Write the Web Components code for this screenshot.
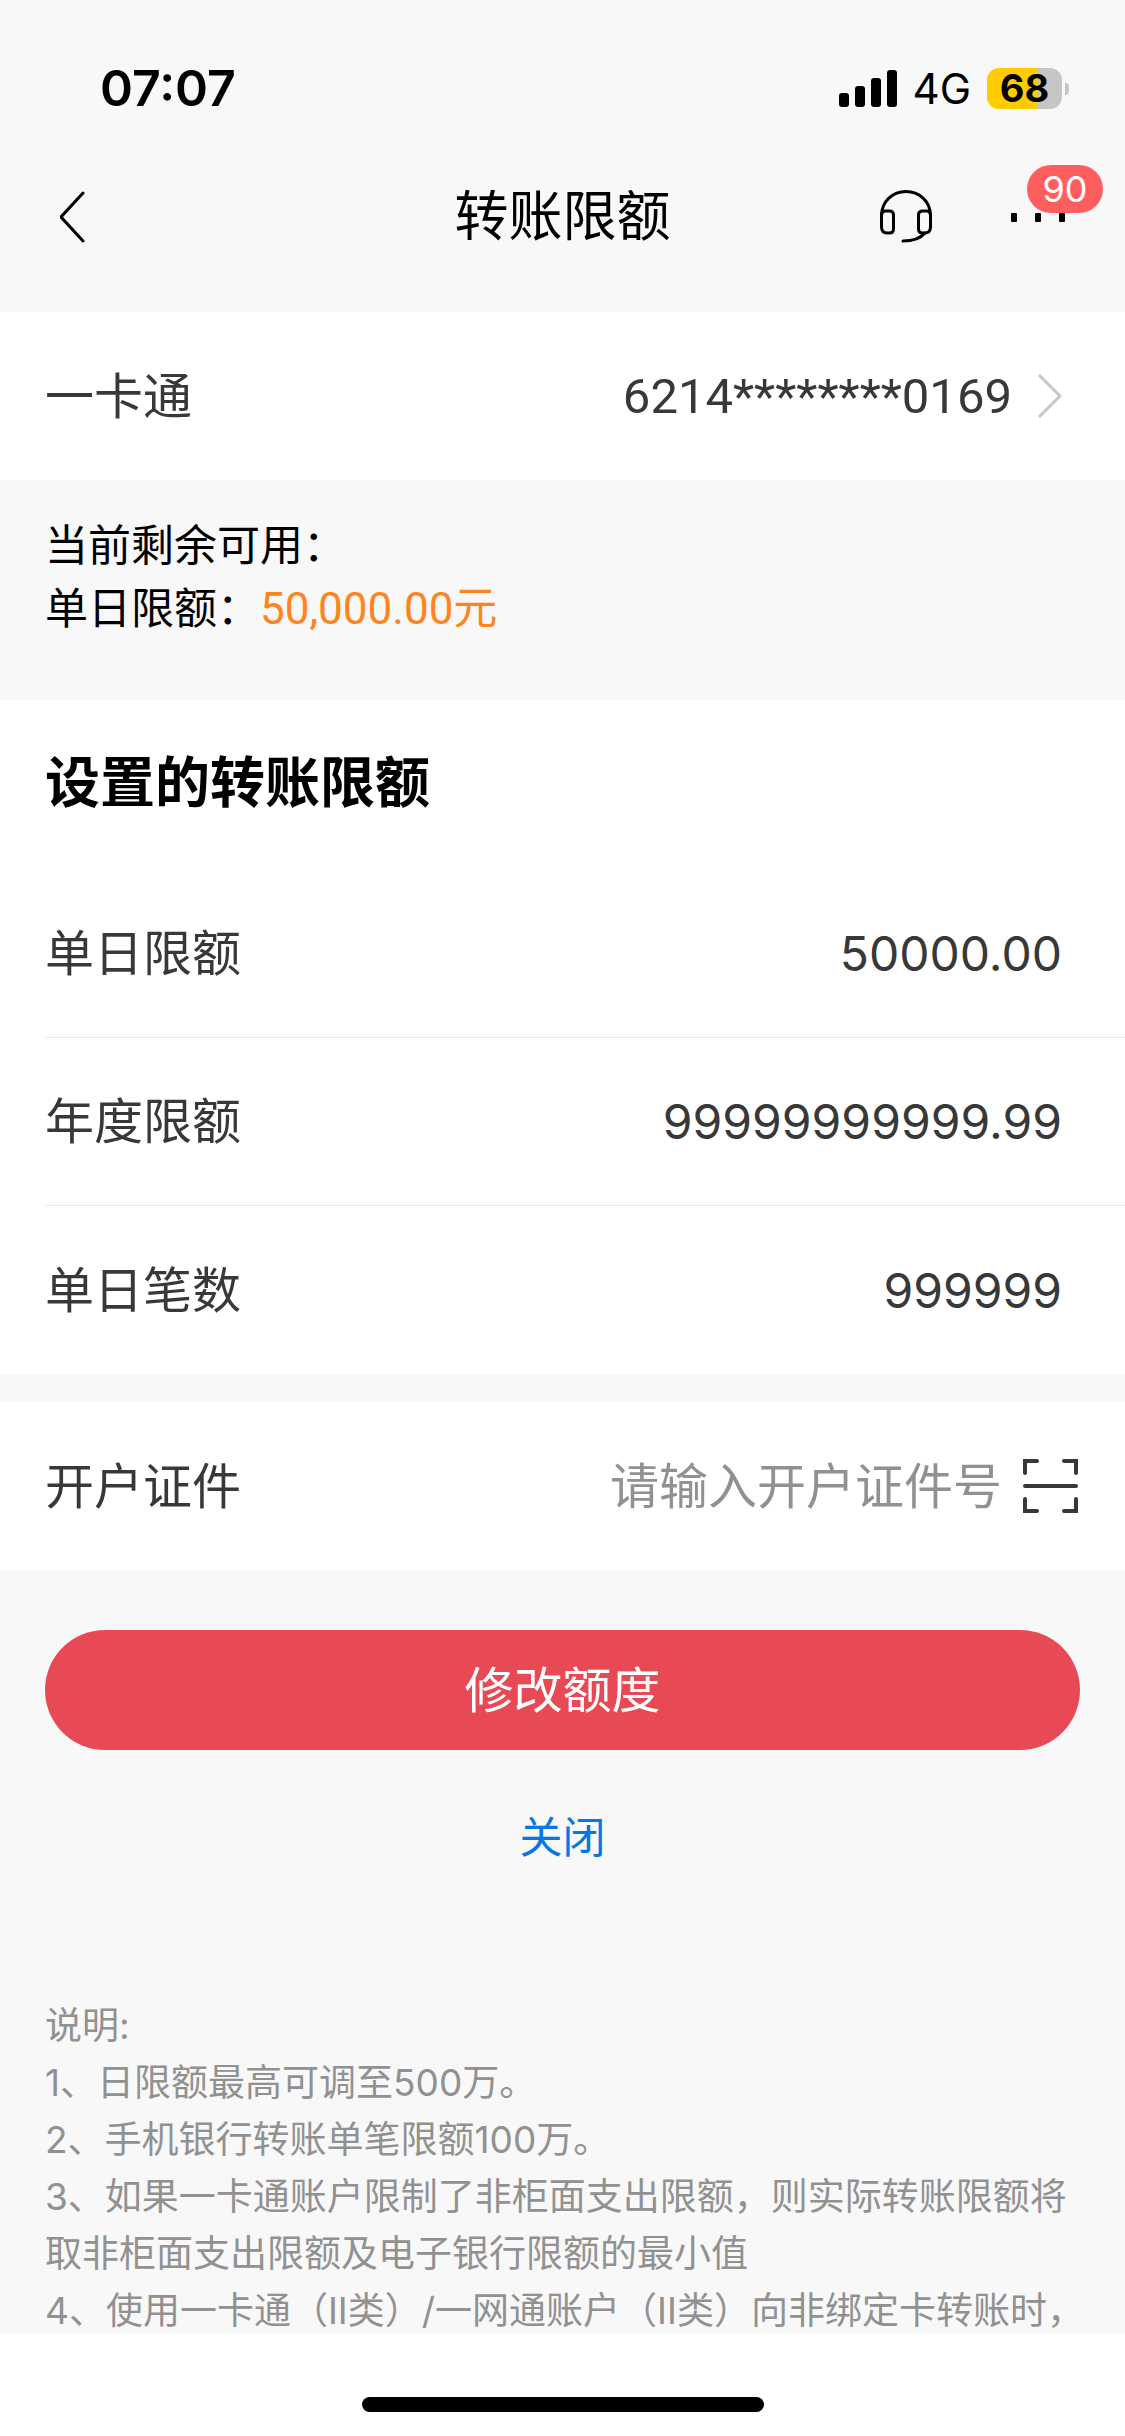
<!DOCTYPE html>
<html lang="zh-CN">
<head>
  <meta charset="UTF-8">
  <meta name="viewport" content="width=device-width, initial-scale=1">
  <title>转账限额</title>
  <style>
    :root {
      --bg: #f8f8f8;
      --surface: #ffffff;
      --text: #383838;
      --muted: #919191;
      --line: #e8e8e8;
      --accent: #e84a55;
      --orange: #ff8420;
      --link: #0577e6;
      --gutter: 45px;
      --narrow: Roboto, "Noto Sans CJK SC", sans-serif;
    }

    body {
      margin: 0;
      background: var(--bg);
      color: #000;
      font-family: Inter, "Noto Sans CJK SC", sans-serif;
      font-size: 49px;
      line-height: 63px;
    }
  </style>
</head>
<body>
  <limit-screen>
    <status-bar slot="header" time="07:07" network="4G" battery="68"></status-bar>
    <nav-bar slot="header" badge="90">转账限额</nav-bar>

    <setting-row href="#card"><span slot="label">一卡通</span>6214********0169</setting-row>

    <quota-summary><span slot="title">当前剩余可用：</span><span slot="label">单日限额：</span>50,000.00元</quota-summary>

    <setting-group heading="设置的转账限额">
      <setting-row divider><span slot="label">单日限额</span>50000.00</setting-row>
      <setting-row divider><span slot="label">年度限额</span>99999999999.99</setting-row>
      <setting-row><span slot="label">单日笔数</span>999999</setting-row>
    </setting-group>

    <id-field label="开户证件" placeholder="请输入开户证件号"></id-field>

    <form-actions>
      <span slot="submit">修改额度</span>
      <span slot="close">关闭</span>
    </form-actions>

    <notes-list>
      <p>说明:</p>
      <p>1、日限额最高可调至500万。</p>
      <p>2、手机银行转账单笔限额100万。</p>
      <p>3、如果一卡通账户限制了非柜面支出限额，则实际转账限额将取非柜面支出限额及电子银行限额的最小值</p>
      <p>4、使用一卡通（II类）/一网通账户（II类）向非绑定卡转账时，</p>
    </notes-list>
  </limit-screen>

  <script>
    class LimitScreen extends HTMLElement {
      constructor() {
        super();
        this.attachShadow({ mode: 'open' });
        this.shadowRoot.innerHTML = `
        <style>
          :host {
            display: flex;
            flex-direction: column;
            height: 100vh;
          }

          main {
            flex: 1;
            min-height: 0;
            overflow: hidden;
          }

          footer {
            display: flex;
            justify-content: center;
            align-items: flex-end;
            box-sizing: border-box;
            height: 103px;
            padding-bottom: 24px;
            background: var(--surface);
          }

          .home {
            width: 402px;
            height: 15px;
            border-radius: 8px;
            background: #000;
          }
        </style>
        <header><slot name="header"></slot></header>
        <main><slot></slot></main>
        <footer><div class="home"></div></footer>
        `;
      }
    }

    class StatusBar extends HTMLElement {
      constructor() {
        super();
        this.attachShadow({ mode: 'open' });
      }

      connectedCallback() {
        const level = parseInt(this.getAttribute('battery')) || 0;

        this.shadowRoot.innerHTML = `
        <style>
          :host {
            display: flex;
            justify-content: space-between;
            align-items: center;
            box-sizing: border-box;
            height: 144px;
            padding: 33px 56px 0 100px;
          }

          .time {
            font-size: 50px;
            font-weight: 600;
          }

          .status {
            display: flex;
            align-items: center;
          }

          .network {
            margin: 0 16px;
            font-size: 42px;
          }

          .battery {
            display: flex;
            justify-content: center;
            align-items: center;
            width: 75px;
            height: 41px;
            border-radius: 12px;
            background: linear-gradient(to right, #ffcc00 ${level}%, #c6c6c6 ${level}%);
            font-size: 38px;
            font-weight: 700;
          }

          .cap {
            width: 4px;
            height: 12px;
            margin-left: 3px;
            border-radius: 0 6px 6px 0;
            background: #c6c6c6;
          }
        </style>
        <span class="time">${this.getAttribute('time')}</span>
        <div class="status">
          <svg width="58" height="38" viewBox="0 0 58 38" aria-hidden="true">
            <rect x="0" y="23" width="10" height="14" rx="3"/>
            <rect x="16" y="16" width="10" height="21" rx="3"/>
            <rect x="32" y="8" width="10" height="29" rx="3"/>
            <rect x="48" y="0" width="10" height="37" rx="3"/>
          </svg>
          <span class="network">${this.getAttribute('network')}</span>
          <span class="battery">${level}</span>
          <span class="cap"></span>
        </div>
        `;
      }
    }

    class NavBar extends HTMLElement {
      constructor() {
        super();
        this.attachShadow({ mode: 'open' });
      }

      connectedCallback() {
        this.shadowRoot.innerHTML = `
        <style>
          :host {
            display: grid;
            grid-template-columns: 1fr auto 1fr;
            align-items: center;
            box-sizing: border-box;
            height: 168px;
            padding: 0 60px 24px;
          }

          h1 {
            margin: 0;
            font-size: 54px;
            font-weight: 400;
          }

          button {
            display: flex;
            justify-content: center;
            align-items: center;
            width: 54px;
            height: 54px;
            padding: 0;
            border: 0;
            background: none;
            cursor: pointer;
          }

          .tools {
            display: flex;
            justify-content: flex-end;
            gap: 78px;
          }

          .more {
            position: relative;
          }

          /* sits over the last of the three dots */
          .badge {
            position: absolute;
            top: -24px;
            left: 16px;
            width: 76px;
            height: 48px;
            border-radius: 24px;
            background: #ff5e5e;
            color: #fff;
            font: 36px/48px Inter, sans-serif;
            text-align: center;
          }
        </style>
        <button aria-label="返回">
          <svg width="54" height="54" viewBox="0 0 54 54" fill="none" stroke="#000" stroke-width="3" stroke-linecap="round" stroke-linejoin="round">
            <path d="M23 4 1 28l22 24"/>
          </svg>
        </button>
        <h1><slot></slot></h1>
        <div class="tools">
          <button aria-label="客服">
            <svg width="54" height="54" viewBox="0 0 54 54" fill="none" stroke="#000" stroke-width="3" stroke-linecap="round">
              <path d="M2.500 30V27C2.500 12 14 2.500 27 2.500S51.500 12 51.500 27v3"/>
              <path d="M2.500 26q0-4 4-4h4q4 0 4 4v14q0 4-4 4h-2q-6 0-6-6z"/>
              <path d="M51.500 26q0-4-4-4h-4q-4 0-4 4v14q0 4 4 4h2q6 0 6-6z"/>
              <path d="M46 44C41 50 34 52 24 52"/>
            </svg>
          </button>
          <button class="more" aria-label="更多">
            <svg width="54" height="54" viewBox="0 0 54 54">
              <rect x="0" y="24" width="6" height="9" rx="1"/>
              <rect x="24" y="24" width="6" height="9" rx="1"/>
              <rect x="48" y="24" width="6" height="9" rx="1"/>
            </svg>
            <span class="badge">${this.getAttribute('badge')}</span>
          </button>
        </div>
        `;
      }
    }

    class SettingRow extends HTMLElement {
      constructor() {
        super();
        this.attachShadow({ mode: 'open' });
      }

      connectedCallback() {
        const href = this.getAttribute('href');
        const content = '<slot name="label"></slot><span class="value"><slot></slot></span>';

        this.shadowRoot.innerHTML = `
        <style>
          :host {
            display: block;
            padding-left: var(--gutter);
            background: var(--surface);
            color: var(--text);
          }

          .row {
            display: flex;
            justify-content: space-between;
            align-items: center;
            box-sizing: border-box;
            height: 168px;
            padding-right: 63px;
            color: inherit;
            text-decoration: none;
          }

          :host([divider]) .row {
            border-bottom: 1px solid var(--line);
          }

          .value {
            flex: 1;
            font-size: 48px;
            text-align: right;
          }

          a .value {
            font-family: var(--narrow);
            font-size: 49px;
          }

          svg {
            margin-left: 26px;
          }
        </style>
        ${href ? `<a class="row" href="${href}">${content}${this.getArrow()}</a>` : `<div class="row">${content}</div>`}
        `;
      }

      getArrow() {
        return `
        <svg width="24" height="44" viewBox="0 0 24 44" fill="none" stroke="#c6c6c6" stroke-width="3" aria-hidden="true">
          <path d="m1 1 21 21L1 43"/>
        </svg>`;
      }
    }

    class QuotaSummary extends HTMLElement {
      constructor() {
        super();
        this.attachShadow({ mode: 'open' });
        this.shadowRoot.innerHTML = `
        <style>
          :host {
            display: block;
            box-sizing: border-box;
            height: 220px;
            padding: 34px var(--gutter) 0;
            font-size: 43px;
          }

          .amount {
            color: var(--orange);
            font-family: var(--narrow);
            font-size: 44px;
          }
        </style>
        <div><slot name="title"></slot></div>
        <div><slot name="label"></slot><span class="amount"><slot></slot></span></div>
        `;
      }
    }

    class SettingGroup extends HTMLElement {
      constructor() {
        super();
        this.attachShadow({ mode: 'open' });
      }

      connectedCallback() {
        this.shadowRoot.innerHTML = `
        <style>
          :host {
            display: block;
            margin-bottom: 28px;
          }

          h2 {
            margin: 0;
            padding: 51px var(--gutter) 56px;
            background: var(--surface);
            font-size: 55px;
            font-weight: 700;
          }
        </style>
        <h2>${this.getAttribute('heading')}</h2>
        <slot></slot>
        `;
      }
    }

    class IdField extends HTMLElement {
      constructor() {
        super();
        this.attachShadow({ mode: 'open' });
      }

      connectedCallback() {
        this.shadowRoot.innerHTML = `
        <style>
          :host {
            display: flex;
            align-items: center;
            height: 168px;
            padding: 0 45px;
            background: var(--surface);
            color: var(--text);
          }

          input {
            flex: 1;
            min-width: 0;
            height: 80px;
            margin-right: 20px;
            padding: 0;
            border: 0;
            outline: 0;
            background: none;
            color: inherit;
            font: inherit;
            text-align: right;
          }

          input::placeholder {
            color: var(--muted);
          }

          button {
            display: flex;
            padding: 0;
            border: 0;
            background: none;
            cursor: pointer;
          }
        </style>
        <label for="id-number">${this.getAttribute('label')}</label>
        <input id="id-number" type="text" placeholder="${this.getAttribute('placeholder')}">
        <button aria-label="扫描证件">
          <svg width="58" height="54" viewBox="0 0 58 54" fill="none" stroke="#383838" stroke-width="4" stroke-linecap="round">
            <path d="M3 14V2h12M42 2h12v12M54 40v12H42M15 52H3V40M3 27h51"/>
          </svg>
        </button>
        `;
      }
    }

    class FormActions extends HTMLElement {
      constructor() {
        super();
        this.attachShadow({ mode: 'open' });
        this.shadowRoot.innerHTML = `
        <style>
          :host {
            display: flex;
            flex-direction: column;
            align-items: center;
            padding: 60px var(--gutter) 0;
          }

          button {
            width: 100%;
            height: 120px;
            padding: 0;
            border: 0;
            border-radius: 60px;
            background: var(--accent);
            color: #fff;
            font: inherit;
            cursor: pointer;
          }

          a {
            margin-top: 56px;
            color: var(--link);
            font-size: 43px;
            text-decoration: none;
          }
        </style>
        <button type="button"><slot name="submit"></slot></button>
        <a href="#close"><slot name="close"></slot></a>
        `;
      }
    }

    class NotesList extends HTMLElement {
      constructor() {
        super();
        this.attachShadow({ mode: 'open' });
        this.shadowRoot.innerHTML = `
        <style>
          :host {
            display: block;
            padding: 128px 36px 0 var(--gutter);
            color: var(--muted);
            font-size: 37px;
            line-height: 57px;
          }

          ::slotted(p) {
            margin: 0;
          }
        </style>
        <slot></slot>
        `;
      }
    }

    customElements.define('limit-screen', LimitScreen);
    customElements.define('status-bar', StatusBar);
    customElements.define('nav-bar', NavBar);
    customElements.define('setting-row', SettingRow);
    customElements.define('quota-summary', QuotaSummary);
    customElements.define('setting-group', SettingGroup);
    customElements.define('id-field', IdField);
    customElements.define('form-actions', FormActions);
    customElements.define('notes-list', NotesList);
  </script>
</body>
</html>
